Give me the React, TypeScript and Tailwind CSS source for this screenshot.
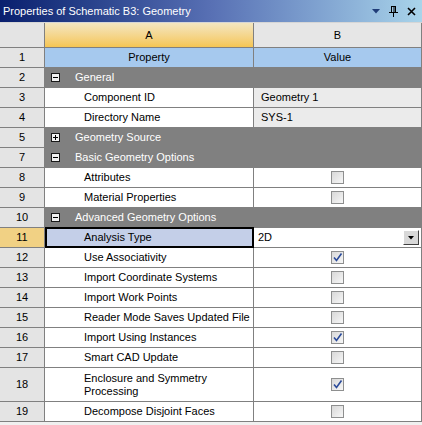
import React from "react";

type Row =
  | { n: number; kind: "group"; label: string; open: boolean }
  | { n: number; kind: "text"; label: string; value: string }
  | { n: number; kind: "check"; label: string; checked: boolean }
  | { n: number; kind: "select"; label: string; value: string };

const rows: Row[] = [
  { n: 2, kind: "group", label: "General", open: true },
  { n: 3, kind: "text", label: "Component ID", value: "Geometry 1" },
  { n: 4, kind: "text", label: "Directory Name", value: "SYS-1" },
  { n: 5, kind: "group", label: "Geometry Source", open: false },
  { n: 7, kind: "group", label: "Basic Geometry Options", open: true },
  { n: 8, kind: "check", label: "Attributes", checked: false },
  { n: 9, kind: "check", label: "Material Properties", checked: false },
  { n: 10, kind: "group", label: "Advanced Geometry Options", open: true },
  { n: 11, kind: "select", label: "Analysis Type", value: "2D" },
  { n: 12, kind: "check", label: "Use Associativity", checked: true },
  { n: 13, kind: "check", label: "Import Coordinate Systems", checked: false },
  { n: 14, kind: "check", label: "Import Work Points", checked: false },
  { n: 15, kind: "check", label: "Reader Mode Saves Updated File", checked: false },
  { n: 16, kind: "check", label: "Import Using Instances", checked: true },
  { n: 17, kind: "check", label: "Smart CAD Update", checked: false },
  { n: 18, kind: "check", label: "Enclosure and Symmetry|Processing", checked: true },
  { n: 19, kind: "check", label: "Decompose Disjoint Faces", checked: false },
];

function Checkbox({ checked }: { checked: boolean }) {
  return (
    <div className="w-[13px] h-[13px] border border-[#8e8f8f] bg-gradient-to-br from-[#d8d8d8] to-[#f7f7f7] flex items-center justify-center">
      {checked && (
        <svg width="11" height="11" viewBox="0 0 11 11">
          <path d="M2 5.5 L4.5 8.5 L9.5 1.5" fill="none" stroke="#2a4a9a" strokeWidth="1.6" />
        </svg>
      )}
    </div>
  );
}

function ExpandBox({ open }: { open: boolean }) {
  return (
    <div className="w-[9px] h-[9px] border border-[#1a1a1a] bg-[#f2f2f2] flex items-center justify-center">
      <svg width="7" height="7" viewBox="0 0 7 7">
        <path d="M1 3.5 H6" stroke="#000" strokeWidth="1" />
        {!open && <path d="M3.5 1 V6" stroke="#000" strokeWidth="1" />}
      </svg>
    </div>
  );
}

export default function App() {
  const font = { fontFamily: '"Liberation Sans", Arial, sans-serif' };
  return (
    <div className="w-[422px] h-[425px] bg-[#f0f0f0] overflow-hidden text-[11px] text-black" style={font}>
      {/* Title bar */}
      <div className="h-[22px] flex items-center bg-gradient-to-r from-[#0a1f6e] via-[#5870b4] to-[#a9d4ea] pl-[3px] pr-[6px]">
        <span className="text-white text-[11px] flex-1">Properties of Schematic B3: Geometry</span>
        <div className="flex items-center gap-[9px]">
          <svg width="8" height="5" viewBox="0 0 8 5">
            <path d="M0 0 H8 L4 4.5 Z" fill="#203c78" />
          </svg>
          <svg width="9" height="11" viewBox="0 0 9 11">
            <path d="M2 0.5 H7 M2.5 0.5 V6 M6.5 0.5 V6 M0 6.5 H9 M4.5 6.5 V11" stroke="#000" strokeWidth="1" fill="none" />
            <path d="M5 1 V6" stroke="#000" strokeWidth="1" />
          </svg>
          <svg width="9" height="9" viewBox="0 0 9 9">
            <path d="M1 1 L8 8 M8 1 L1 8" stroke="#000" strokeWidth="1.6" />
          </svg>
        </div>
      </div>
      <div className="h-px bg-[#d6d6d6]" />

      {/* Header row */}
      <div className="grid grid-cols-[45px_209px_168px] h-[25px]">
        <div className="bg-[#e4e4e4] border-r border-b border-[#808080]" />
        <div className="bg-gradient-to-b from-[#f3e6c0] to-[#f6c652] border-r border-b border-[#808080] flex items-center justify-center">A</div>
        <div className="bg-[#e6e6e6] border-r border-b border-[#808080] flex items-center justify-center">B</div>
      </div>

      {/* Row 1 */}
      <div className="grid grid-cols-[45px_209px_168px] h-[20px]">
        <div className="bg-[#e4e4e4] border-r border-b border-[#808080] flex items-center justify-center">1</div>
        <div className="bg-[#a6c9ee] border-r border-b border-[#808080] flex items-center justify-center">Property</div>
        <div className="bg-[#a6c9ee] border-r border-b border-[#808080] flex items-center justify-center">Value</div>
      </div>

      {rows.map((r) => {
        const tall = r.n === 18;
        const h = tall ? "h-[34px]" : "h-[20px]";
        if (r.kind === "group") {
          return (
            <div key={r.n} className={`grid grid-cols-[45px_377px] ${h}`}>
              <div className="bg-[#e4e4e4] border-r border-b border-[#808080] flex items-center justify-center">{r.n}</div>
              <div className="bg-[#808080] border-b border-[#808080] flex items-center pl-[6px] text-white">
                <ExpandBox open={r.open} />
                <span className="ml-[15px]">{r.label}</span>
              </div>
            </div>
          );
        }
        const selected = r.kind === "select";
        const lines = r.label.split("|");
        return (
          <div key={r.n} className={`grid grid-cols-[45px_209px_168px] ${h}`}>
            <div
              className={`${selected ? "bg-[#f1d184]" : "bg-[#e4e4e4]"} border-r border-b border-[#808080] flex items-center justify-center`}
            >
              {r.n}
            </div>
            <div
              className={`${
                selected ? "bg-[#c4cfe8] border-2 border-black -mt-px" : "bg-white border-r border-b border-[#808080]"
              } flex flex-col justify-center pl-[39px] leading-[13px] whitespace-nowrap`}
            >
              {lines.map((l, i) => (
                <span key={i} className={selected ? "-ml-[2px]" : ""}>
                  {l}
                </span>
              ))}
            </div>
            {r.kind === "text" && (
              <div className="bg-[#ebebeb] border-r border-b border-[#808080] flex items-center pl-[7px]">{r.value}</div>
            )}
            {r.kind === "check" && (
              <div className="bg-white border-r border-b border-[#808080] flex items-center justify-center">
                <Checkbox checked={r.checked} />
              </div>
            )}
            {r.kind === "select" && (
              <div className="bg-white border-r border-b border-[#808080] flex items-center pl-[4px] pr-[2px]">
                <span className="flex-1">{r.value}</span>
                <div className="w-[16px] h-[15px] bg-[#d8d8d8] border border-t-[#ffffff] border-l-[#ffffff] border-r-[#404040] border-b-[#404040] flex items-center justify-center">
                  <svg width="6" height="4" viewBox="0 0 6 4">
                    <path d="M0 0 H6 L3 3.5 Z" fill="#000" />
                  </svg>
                </div>
              </div>
            )}
          </div>
        );
      })}
    </div>
  );
}
